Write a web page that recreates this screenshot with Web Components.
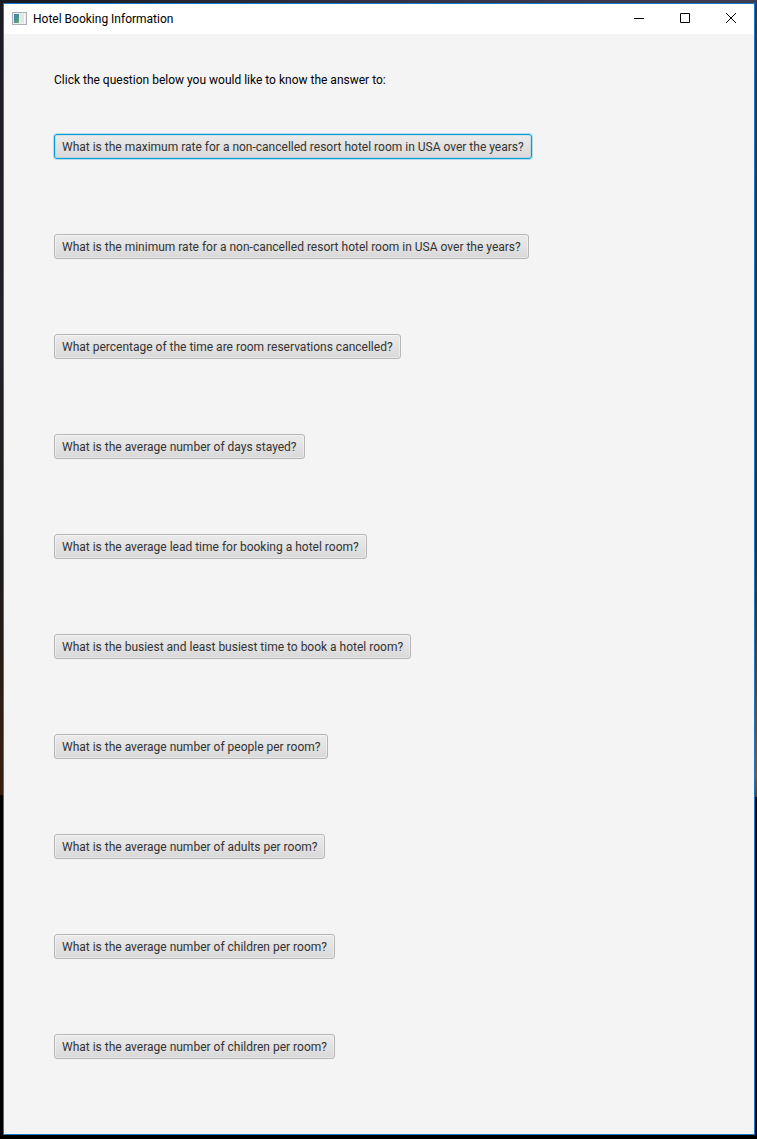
<!DOCTYPE html>
<html lang="en">
<head>
<meta charset="utf-8">
<title>Hotel Booking Information</title>
<style>
html, body { margin: 0; }
body { font-family: Roboto, "Open Sans", sans-serif; font-size: 12px; }
</style>
</head>
<body>
<desktop-backdrop>
  <app-window>
    <title-bar slot="title">Hotel Booking Information</title-bar>
    <question-list>
      <span slot="prompt">Click the question below you would like to know the answer to:</span>
      <question-button active>What is the maximum rate for a non-cancelled resort hotel room in USA over the years?</question-button>
      <question-button>What is the minimum rate for a non-cancelled resort hotel room in USA over the years?</question-button>
      <question-button>What percentage of the time are room reservations cancelled?</question-button>
      <question-button>What is the average number of days stayed?</question-button>
      <question-button>What is the average lead time for booking a hotel room?</question-button>
      <question-button>What is the busiest and least busiest time to book a hotel room?</question-button>
      <question-button>What is the average number of people per room?</question-button>
      <question-button>What is the average number of adults per room?</question-button>
      <question-button>What is the average number of children per room?</question-button>
      <question-button>What is the average number of children per room?</question-button>
    </question-list>
  </app-window>
</desktop-backdrop>
<script>
function define(name, html) {
  const template = document.createElement('template');
  template.innerHTML = html;
  customElements.define(name, class extends HTMLElement {
    constructor() {
      super();
      this.attachShadow({ mode: 'open' }).append(template.content.cloneNode(true));
    }
  });
}

define('desktop-backdrop', `
<style>
:host {
  display: flex; box-sizing: border-box; min-height: 100vh;
  padding: 3px 2px 4px 3px;
  background:
    linear-gradient(90deg, #191b21, #34374a 60%, #3c3f50) top / 100% 3px no-repeat,
    linear-gradient(#34384a, #30323c 25%, #292a2f 48%, #4b3626 55%, #95501d 68%, #7d350a 70%, #000 70%) right / 2px 100% no-repeat,
    linear-gradient(#1b1d23, #202127 30%, #1c1a1b 50%, #38200f 69.8%, #000 69.8%);
}
</style><slot></slot>`);

define('app-window', `
<style>
:host { display: flex; flex-direction: column; flex: 1; min-width: 0; border: 1px solid #1979ca; background: #f4f4f4; }
</style><slot name="title"></slot><slot></slot>`);

define('title-bar', `
<style>
:host { display: flex; align-items: center; height: 30px; padding-left: 8px; background: #fff; color: #000; }
.name { flex: 1; padding-left: 6px; white-space: nowrap; overflow: hidden; }
svg { display: block; flex: none; }
button { align-self: flex-start; width: 46px; height: 28px; padding: 0; border: 0; background: none; display: grid; place-items: center; }
</style>
<svg width="15" height="14" viewBox="0 0 15 14" aria-hidden="true">
  <defs><linearGradient id="pane" x1="0" y1="0" x2="1" y2="1">
    <stop offset="0" stop-color="#4f7fb4"/><stop offset=".5" stop-color="#4c9090"/><stop offset="1" stop-color="#6db06c"/>
  </linearGradient></defs>
  <rect width="15" height="13" fill="#d3d6d9"/>
  <rect x=".5" y=".5" width="14" height="12" fill="#eceeef" stroke="#a9afb5"/>
  <rect x="2" y="2" width="5" height="9" fill="url(#pane)"/>
  <rect x="8" y="2" width="4" height="9" fill="#e2e6e6"/>
  <rect x="12" y="2" width="1" height="9" fill="#fafafa"/>
</svg>
<span class="name"><slot></slot></span>
<button aria-label="Minimize"><svg width="10" height="10" viewBox="0 0 10 10"><path d="M0 5.5H10" stroke="#000"/></svg></button>
<button aria-label="Maximize"><svg width="10" height="10" viewBox="0 0 10 10"><path d="M.5 .5H9.5V9.5H.5Z" fill="none" stroke="#000"/></svg></button>
<button aria-label="Close"><svg width="10" height="10" viewBox="0 0 10 10"><path d="M0 0L10 10M10 0L0 10" stroke="#000"/></svg></button>`);

define('question-list', `
<style>
:host { display: flex; flex-direction: column; align-items: flex-start; padding: 38px 50px 75px; }
p { margin: 0 0 45px; line-height: 17px; color: #000; }
.questions { display: flex; flex-direction: column; align-items: flex-start; gap: 75px; }
</style><p><slot name="prompt"></slot></p><div class="questions"><slot></slot></div>`);

define('question-button', `
<style>
:host { display: block; }
button {
  display: block; box-sizing: border-box; height: 25px; padding: 2px 7px 0;
  border: 1px solid #b6b6b6; border-radius: 3px;
  background: linear-gradient(#ebebeb, #d9d9d9);
  box-shadow: inset 0 0 0 1px #ffffff66;
  font: inherit; line-height: 21px; color: #333; white-space: nowrap;
}
:host([active]) button { border-color: #039ed3; box-shadow: 0 0 0 1px #039ed344, inset 0 0 0 1px #039ed322; }
</style><button type="button"><slot></slot></button>`);
</script>
</body>
</html>
